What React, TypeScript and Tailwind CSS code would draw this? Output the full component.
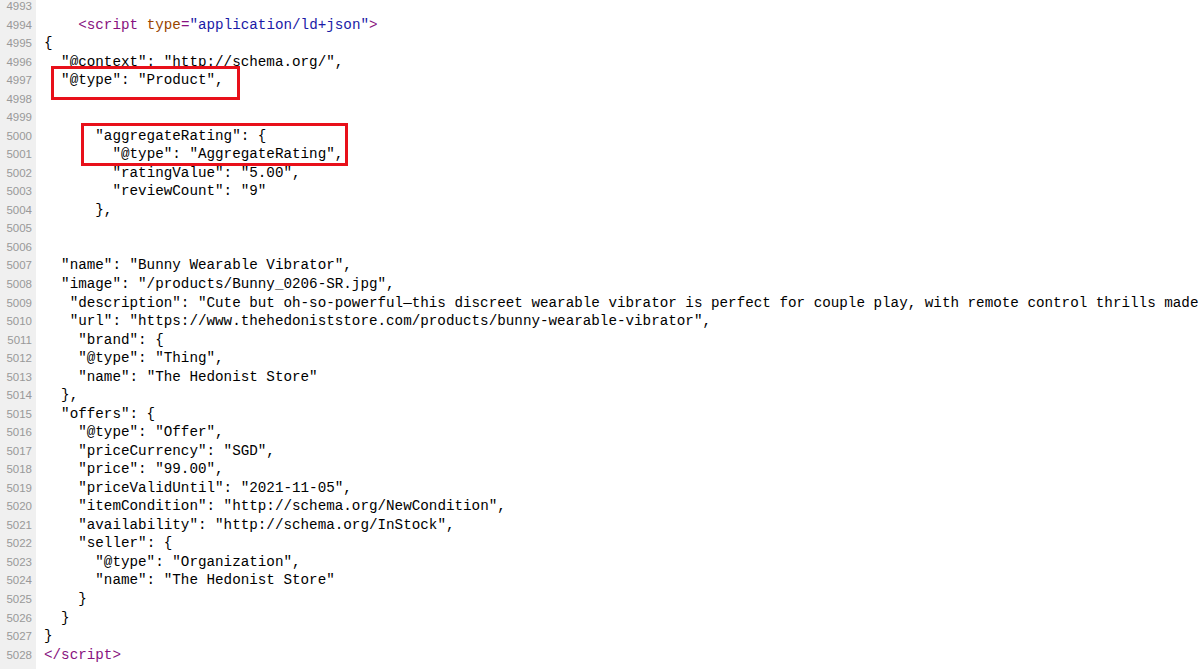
import type { ReactNode } from 'react';

type Line = { n: number; indent: number; content: ReactNode };

const tag = 'text-[#881280]';
const attr = 'text-[#994500]';
const val = 'text-[#1a1aa6]';

const lines: Line[] = [
  { n: 4993, indent: 0, content: '' },
  {
    n: 4994,
    indent: 4,
    content: (
      <>
        <span className={tag}>&lt;script</span> <span className={attr}>type</span>
        <span className={tag}>=</span>
        <span className={val}>"application/ld+json"</span>
        <span className={tag}>&gt;</span>
      </>
    ),
  },
  { n: 4995, indent: 0, content: '{' },
  { n: 4996, indent: 2, content: '"@context": "http://schema.org/",' },
  { n: 4997, indent: 2, content: '"@type": "Product",' },
  { n: 4998, indent: 0, content: '' },
  { n: 4999, indent: 0, content: '' },
  { n: 5000, indent: 6, content: '"aggregateRating": {' },
  { n: 5001, indent: 8, content: '"@type": "AggregateRating",' },
  { n: 5002, indent: 8, content: '"ratingValue": "5.00",' },
  { n: 5003, indent: 8, content: '"reviewCount": "9"' },
  { n: 5004, indent: 6, content: '},' },
  { n: 5005, indent: 0, content: '' },
  { n: 5006, indent: 0, content: '' },
  { n: 5007, indent: 2, content: '"name": "Bunny Wearable Vibrator",' },
  { n: 5008, indent: 2, content: '"image": "/products/Bunny_0206-SR.jpg",' },
  {
    n: 5009,
    indent: 3,
    content:
      '"description": "Cute but oh-so-powerful\u2014this discreet wearable vibrator is perfect for couple play, with remote control thrills made for teasing and pleasing.",',
  },
  { n: 5010, indent: 3, content: '"url": "https://www.thehedoniststore.com/products/bunny-wearable-vibrator",' },
  { n: 5011, indent: 4, content: '"brand": {' },
  { n: 5012, indent: 4, content: '"@type": "Thing",' },
  { n: 5013, indent: 4, content: '"name": "The Hedonist Store"' },
  { n: 5014, indent: 2, content: '},' },
  { n: 5015, indent: 2, content: '"offers": {' },
  { n: 5016, indent: 4, content: '"@type": "Offer",' },
  { n: 5017, indent: 4, content: '"priceCurrency": "SGD",' },
  { n: 5018, indent: 4, content: '"price": "99.00",' },
  { n: 5019, indent: 4, content: '"priceValidUntil": "2021-11-05",' },
  { n: 5020, indent: 4, content: '"itemCondition": "http://schema.org/NewCondition",' },
  { n: 5021, indent: 4, content: '"availability": "http://schema.org/InStock",' },
  { n: 5022, indent: 4, content: '"seller": {' },
  { n: 5023, indent: 6, content: '"@type": "Organization",' },
  { n: 5024, indent: 6, content: '"name": "The Hedonist Store"' },
  { n: 5025, indent: 4, content: '}' },
  { n: 5026, indent: 2, content: '}' },
  { n: 5027, indent: 0, content: '}' },
  { n: 5028, indent: 0, content: <span className={tag}>&lt;/script&gt;</span> },
  { n: 5029, indent: 0, content: '' },
];

export default function App() {
  return (
    <div className="relative h-[669px] w-[1199px] overflow-hidden bg-white">
      <div className="-mt-[3px] flex">
        <div className="w-[36px] shrink-0 bg-[#f0f0f0] pr-[4px] text-right font-['Liberation_Sans',Arial,sans-serif] text-[11.5px] text-[#999]">
          {lines.map((l) => (
            <div key={l.n} className="h-[18.54px] leading-[18.54px]">
              {l.n}
            </div>
          ))}
        </div>
        <div className="min-w-0 flex-1 pl-[8px] font-['Liberation_Mono',monospace] text-[14.25px] text-black">
          {lines.map((l) => (
            <div key={l.n} className="h-[18.54px] whitespace-pre leading-[18.54px]">
              {' '.repeat(l.indent)}
              {l.content}
            </div>
          ))}
        </div>
      </div>

      <div className="pointer-events-none absolute left-[51px] top-[66px] h-[34px] w-[189px] border-[3px] border-[#e8101a]" />
      <div className="pointer-events-none absolute left-[81px] top-[123px] h-[43px] w-[267px] border-[3px] border-[#e8101a]" />
    </div>
  );
}
